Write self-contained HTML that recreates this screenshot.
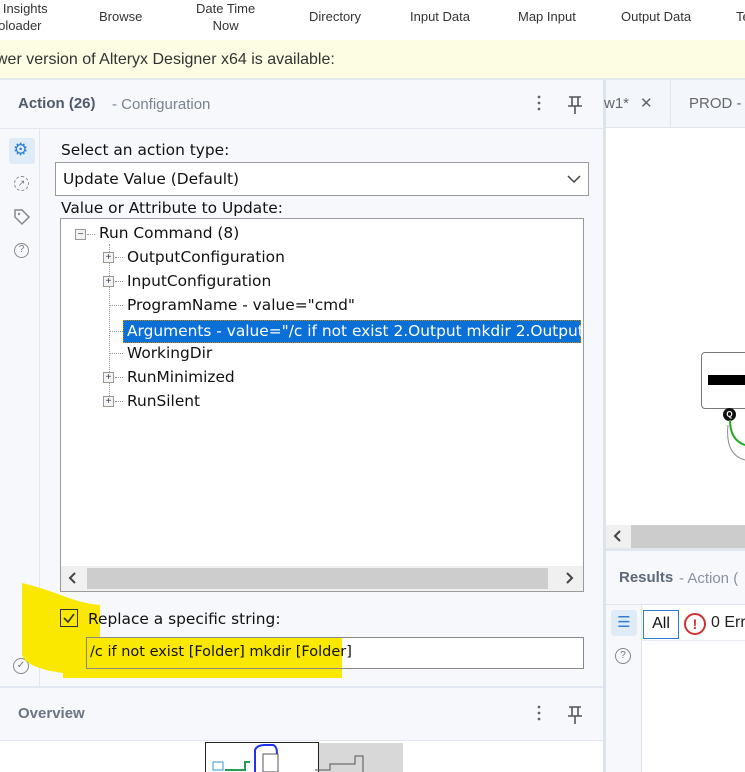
<!DOCTYPE html>
<html><head><meta charset="utf-8"><style>
*{margin:0;padding:0;box-sizing:border-box}
body{width:745px;height:772px;overflow:hidden;position:relative;background:#fff;font-family:"Liberation Sans","DejaVu Sans",sans-serif;color:#222}
.a{position:absolute}
.tb{font-size:13px;color:#333;text-align:center;line-height:17px;white-space:nowrap}
.dv{font-family:"DejaVu Sans",sans-serif;font-size:14px;color:#111;white-space:nowrap}
.ti{font-family:"DejaVu Sans",sans-serif;font-size:15.4px;color:#111;white-space:nowrap;line-height:22px}
.pm{position:absolute;width:11px;height:11px;border:1px solid #999;background:#f3f3f3;font-size:10px;line-height:9px;text-align:center;color:#345}
.hd{font-size:15px;color:#666}
</style></head><body>
<!-- toolbar -->
<div class="a tb" style="left:-8px;top:0">o Insights<br>oloader</div>
<div class="a tb" style="left:99px;top:8px">Browse</div>
<div class="a tb" style="left:196px;top:0">Date Time<br>Now</div>
<div class="a tb" style="left:309px;top:8px">Directory</div>
<div class="a tb" style="left:410px;top:8px">Input Data</div>
<div class="a tb" style="left:518px;top:8px">Map Input</div>
<div class="a tb" style="left:621px;top:8px">Output Data</div>
<div class="a tb" style="left:736px;top:8px">Te</div>
<!-- banner -->
<div class="a" style="left:0;top:40px;width:745px;height:38px;background:#fdfde3"></div>
<div class="a" style="left:-4px;top:51px;font-size:16px;color:#333;white-space:nowrap">wer version of Alteryx Designer x64 is available:</div>
<div class="a" style="left:0;top:78px;width:745px;height:2px;background:#e3e8f0"></div>
<!-- left panel -->
<div class="a" style="left:0;top:80px;width:603px;height:692px;background:#f6f8fb"></div>
<div class="a" style="left:603px;top:80px;width:3px;height:692px;background:#dde3ec"></div>
<div class="a" style="left:18px;top:95px;font-size:15px;color:#4f5a6b;font-weight:bold">Action (26)</div>
<div class="a hd" style="left:112px;top:96px;font-size:15px;color:#7a8291">- Configuration</div>
<svg class="a" style="left:530px;top:94px" width="60" height="24"><circle cx="9" cy="3" r="1.4" fill="#666"/><circle cx="9" cy="9" r="1.4" fill="#666"/><circle cx="9" cy="15" r="1.4" fill="#666"/><path d="M39 3 H51 M42 3 V12 M48 3 V12 M38 12 H52 M45 12 V20" stroke="#555" stroke-width="1.6" fill="none"/></svg>
<div class="a" style="left:0;top:128px;width:603px;height:1px;background:#e3e8f0"></div>
<div class="a" style="left:39px;top:129px;width:1px;height:557px;background:#e3e8f0"></div>
<!-- side icons -->
<div class="a" style="left:9px;top:138px;width:26px;height:26px;background:#e0ebf8;border-radius:3px"></div>
<div class="a" style="left:13px;top:140px;font-size:17px;color:#2f7fd1">⚙</div>
<div class="a" style="left:14px;top:176px;width:15px;height:15px;border:1.5px dashed #888;border-radius:50%;font-size:9px;line-height:12px;text-align:center;color:#777">↗</div>
<svg class="a" style="left:13px;top:208px" width="18" height="18"><path d="M2 2 H9 L16 9 L9 16 L2 9 Z" stroke="#888" stroke-width="1.5" fill="none"/><circle cx="6" cy="6" r="1.2" fill="#888"/></svg>
<div class="a" style="left:14px;top:243px;width:15px;height:15px;border:1.5px solid #888;border-radius:50%;font-size:10px;line-height:12px;text-align:center;color:#777">?</div>
<div class="a" style="left:13px;top:658px;width:16px;height:16px;border:1.5px solid #888;border-radius:50%;font-size:10px;line-height:13px;text-align:center;color:#777">✓</div>
<!-- content -->
<div class="a dv" style="left:61px;top:141px;font-size:15.4px">Select an action type:</div>
<div class="a" style="left:55px;top:162px;width:534px;height:34px;background:#fff;border:1px solid #9a9a9a"></div>
<div class="a dv" style="left:63px;top:170px;font-size:15.4px">Update Value (Default)</div>
<svg class="a" style="left:567px;top:175px" width="14" height="9"><path d="M1 1 L7 7 L13 1" stroke="#444" stroke-width="1.5" fill="none"/></svg>
<div class="a dv" style="left:61px;top:199px;font-size:15.4px">Value or Attribute to Update:</div>
<div class="a" style="left:60px;top:218px;width:524px;height:374px;background:#fff;border:1px solid #9a9a9a"></div>
<!-- tree lines -->
<div class="a" style="left:109px;top:244px;width:0;height:160px;border-left:1px dotted #999"></div>
<div class="pm" style="left:75px;top:229px">−</div>
<div class="a" style="left:87px;top:234px;width:8px;border-top:1px dotted #999"></div>
<div class="a ti" style="left:99px;top:222px">Run Command (8)</div>
<div class="pm" style="left:103px;top:252px">+</div><div class="a" style="left:115px;top:257px;width:8px;border-top:1px dotted #999"></div>
<div class="a ti" style="left:127px;top:246px">OutputConfiguration</div>
<div class="pm" style="left:103px;top:276px">+</div><div class="a" style="left:115px;top:281px;width:8px;border-top:1px dotted #999"></div>
<div class="a ti" style="left:127px;top:270px">InputConfiguration</div>
<div class="a" style="left:110px;top:305px;width:13px;border-top:1px dotted #999"></div>
<div class="a ti" style="left:127px;top:294px">ProgramName - value="cmd"</div>
<div class="a" style="left:110px;top:331px;width:13px;border-top:1px dotted #999"></div>
<div class="a" style="left:123px;top:320px;width:458px;height:23px;background:#0a6fd6;border:1px dotted #c80"></div>
<div class="a ti" style="left:127px;top:320px;color:#fff;width:454px;overflow:hidden">Arguments - value="/c if not exist 2.Output mkdir 2.Output</div>
<div class="a" style="left:110px;top:353px;width:13px;border-top:1px dotted #999"></div>
<div class="a ti" style="left:127px;top:342px">WorkingDir</div>
<div class="pm" style="left:103px;top:372px">+</div><div class="a" style="left:115px;top:377px;width:8px;border-top:1px dotted #999"></div>
<div class="a ti" style="left:127px;top:366px">RunMinimized</div>
<div class="pm" style="left:103px;top:396px">+</div><div class="a" style="left:115px;top:401px;width:8px;border-top:1px dotted #999"></div>
<div class="a ti" style="left:127px;top:390px">RunSilent</div>
<!-- hscroll -->
<div class="a" style="left:61px;top:566px;width:522px;height:25px;background:#f0f0f0"></div>
<div class="a" style="left:87px;top:568px;width:461px;height:21px;background:#cdcdcd"></div>
<svg class="a" style="left:68px;top:572px" width="10" height="12"><path d="M7 1 L2 6 L7 11" stroke="#444" stroke-width="2" fill="none"/></svg>
<svg class="a" style="left:564px;top:572px" width="10" height="12"><path d="M3 1 L8 6 L3 11" stroke="#444" stroke-width="2" fill="none"/></svg>
<!-- yellow highlight -->
<svg class="a" style="left:0;top:580px" width="400" height="100"><path d="M22 3 C60 12 70 22 100 25 L100 67 C180 68 260 70 342 72 L342 98 L63 98 L63 93 C40 90 25 84 22 75 Z" fill="#fbe800"/></svg>
<div class="a" style="left:60px;top:609px;width:18px;height:18px;border:1.5px solid #333;background:transparent"></div>
<svg class="a" style="left:62px;top:611px" width="14" height="14"><path d="M2 7 L6 11 L12 3" stroke="#333" stroke-width="1.6" fill="none"/></svg>
<div class="a dv" style="left:88px;top:610px;font-size:15.4px">Replace a specific string:</div>
<div class="a" style="left:86px;top:637px;width:498px;height:32px;border:1px solid #888;background:linear-gradient(to right,#fbe800 0,#fbe800 255px,#fff 255px)"></div>
<div class="a dv" style="left:90px;top:644px;font-size:14.5px">/c if not exist [Folder] mkdir [Folder]</div>
<!-- overview -->
<div class="a" style="left:0;top:686px;width:603px;height:2px;background:#e3e8f0"></div>
<div class="a" style="left:18px;top:705px;font-size:15px;color:#6c7584;font-weight:bold">Overview</div>
<svg class="a" style="left:530px;top:704px" width="60" height="24"><circle cx="9" cy="3" r="1.4" fill="#666"/><circle cx="9" cy="9" r="1.4" fill="#666"/><circle cx="9" cy="15" r="1.4" fill="#666"/><path d="M39 3 H51 M42 3 V12 M48 3 V12 M38 12 H52 M45 12 V20" stroke="#555" stroke-width="1.6" fill="none"/></svg>
<div class="a" style="left:0;top:740px;width:603px;height:1px;background:#e3e8f0"></div>
<div class="a" style="left:0;top:741px;width:603px;height:31px;background:#fff"></div>
<div class="a" style="left:318px;top:743px;width:85px;height:29px;background:#d8d8d8"></div>
<div class="a" style="left:205px;top:742px;width:114px;height:30px;border:1.5px solid #222;border-bottom:none;background:#fff"></div>
<svg class="a" style="left:205px;top:742px" width="200" height="30"><path d="M50 30 V8 Q52 3 60 3 H68 Q72 4 72 12" stroke="#2233ee" stroke-width="2" fill="none"/><path d="M20 28 H40 V20 H45" stroke="#22a050" stroke-width="2" fill="none"/><rect x="8" y="20" width="10" height="8" stroke="#39c" fill="none"/><rect x="58" y="12" width="15" height="18" stroke="#555" fill="none"/><path d="M110 28 H125 V22 H150 V14 H158 V30" stroke="#555" fill="none"/></svg>
<!-- right side -->
<div class="a" style="left:606px;top:80px;width:139px;height:48px;background:#f3f6fb;border-bottom:1px solid #e0e6ee"></div>
<div class="a" style="left:670px;top:80px;width:1px;height:48px;background:#e0e6ee"></div>
<div class="a hd" style="left:604px;top:95px;color:#666">w1*</div>
<div class="a" style="left:640px;top:94px;font-size:15px;color:#666">✕</div>
<div class="a hd" style="left:689px;top:95px;color:#666">PROD -</div>
<div class="a" style="left:701px;top:352px;width:50px;height:57px;border:1.5px solid #777;border-radius:4px;background:#fff"></div>
<div class="a" style="left:708px;top:375px;width:37px;height:10px;background:#000"></div>
<div class="a" style="left:723px;top:408px;width:13px;height:13px;border-radius:50%;background:#111;color:#fff;font-size:8px;text-align:center;line-height:13px;font-weight:bold">Q</div>
<svg class="a" style="left:725px;top:420px" width="20" height="50"><path d="M5 0 Q5 20 20 25" stroke="#2a2" stroke-width="2" fill="none"/><path d="M3 5 Q0 35 20 40" stroke="#888" fill="none"/></svg>
<div class="a" style="left:606px;top:525px;width:139px;height:23px;background:#ccc"></div>
<div class="a" style="left:606px;top:525px;width:25px;height:23px;background:#f0f0f0"></div>
<svg class="a" style="left:613px;top:530px" width="10" height="12"><path d="M7 1 L2 6 L7 11" stroke="#444" stroke-width="2" fill="none"/></svg>
<div class="a" style="left:606px;top:548px;width:139px;height:3px;background:#e0e6ee"></div>
<div class="a" style="left:606px;top:551px;width:139px;height:221px;background:#f6f8fb"></div>
<div class="a" style="left:619px;top:569px;font-size:15px;color:#5e6878;font-weight:bold">Results</div>
<div class="a hd" style="left:679px;top:570px;color:#8a92a0">- Action (</div>
<div class="a" style="left:606px;top:604px;width:139px;height:1px;background:#e0e6ee"></div>
<div class="a" style="left:641px;top:605px;width:1px;height:167px;background:#e0e6ee"></div>
<div class="a" style="left:642px;top:605px;width:103px;height:167px;background:#fff"></div>
<div class="a" style="left:611px;top:610px;width:26px;height:26px;background:#e0ebf8;border-radius:3px;color:#2f7fd1;font-size:15px;text-align:center;line-height:26px">☰</div>
<div class="a" style="left:615px;top:648px;width:16px;height:16px;border:1.5px solid #888;border-radius:50%;font-size:10px;line-height:13px;text-align:center;color:#777">?</div>
<div class="a" style="left:643px;top:610px;width:36px;height:29px;border:1.5px solid #2a7fd4;font-size:16px;line-height:26px;text-align:center;color:#111">All</div>
<div class="a" style="left:684px;top:613px;width:22px;height:22px;border:2px solid #c33;border-radius:50%;color:#c33;font-size:14px;text-align:center;line-height:18px;font-weight:bold">!</div>
<div class="a" style="left:711px;top:614px;font-size:16px;color:#222;white-space:nowrap">0 Err</div>
<div class="a" style="left:642px;top:640px;width:103px;height:1px;background:#e8ecf2"></div>
</body></html>
